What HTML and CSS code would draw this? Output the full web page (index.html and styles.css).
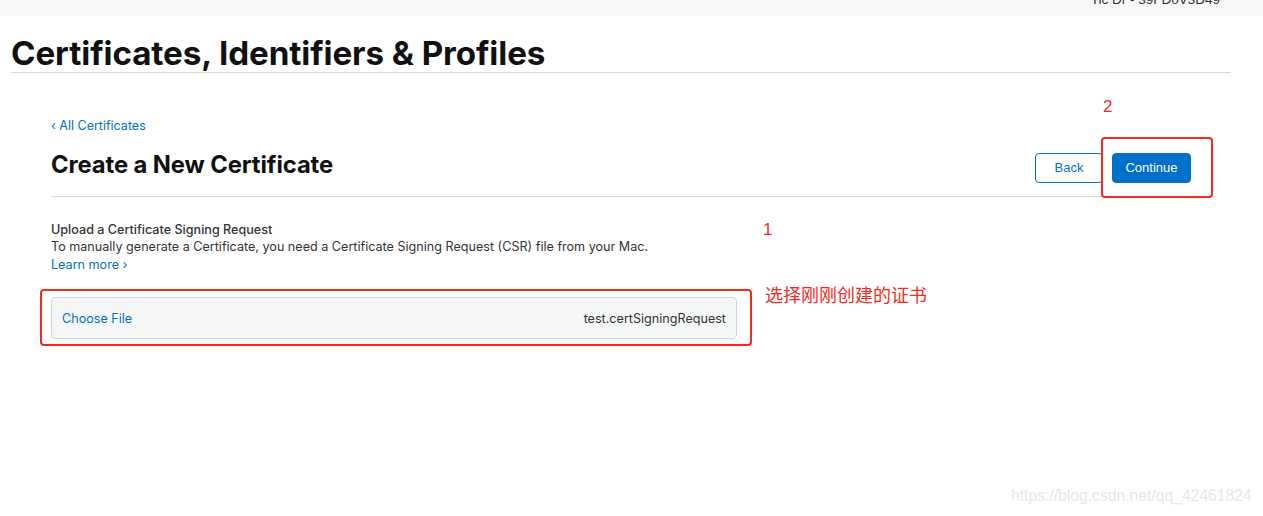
FILE: index.html
```html
<!DOCTYPE html>
<html>
<head>
<meta charset="utf-8">
<link rel="stylesheet" href="styles.css">
</head>
<body>
<div class="topbar"><span class="team">Tic Dr - 39FD0V3D49</span></div>
<header class="header">
  <h1 class="title">Certificates, Identifiers &amp; Profiles</h1>
</header>
<main class="content">
  <a class="back-link" href="#">‹ All Certificates</a>
  <div class="page-head">
    <h2 class="page-title">Create a New Certificate</h2>
    <div class="actions">
      <button class="btn btn-outline">Back</button>
      <button class="btn btn-primary">Continue</button>
    </div>
  </div>
  <section class="upload">
    <div class="upload-title">Upload a Certificate Signing Request</div>
    <div class="upload-desc">To manually generate a Certificate, you need a Certificate Signing Request (CSR) file from your Mac.</div>
    <a class="learn" href="#">Learn more ›</a>
    <div class="file-box">
      <span class="choose">Choose File</span>
      <span class="filename">test.certSigningRequest</span>
    </div>
  </section>
</main>
<div class="anno anno-num2">2</div>
<div class="anno anno-box2"></div>
<div class="anno anno-num1">1</div>
<div class="anno anno-box1"></div>
<div class="anno anno-text">选择刚刚创建的证书</div>
<div class="watermark">https://blog.csdn.net/qq_42461824</div>
</body>
</html>
```

FILE: styles.css
```css
html, body {
  margin: 0;
  padding: 0;
  background: #fff;
  font-family: Inter, "Liberation Sans", Arial, sans-serif;
  color: #1d1d1f;
}
.topbar {
  height: 16px;
  background: #f7f7f7;
  overflow: hidden;
  position: relative;
}
.team {
  position: absolute;
  right: 43px;
  top: -8px;
  font-size: 13.5px;
  line-height: 16px;
  color: #333;
  font-family: "Liberation Sans", Arial, sans-serif;
}
.header {
  margin: 0 32px 0 11px;
  border-bottom: 1px solid #d6d6d6;
  padding-top: 18px;
  height: 38px;
}
.title {
  margin: 0;
  font-size: 33.2px;
  line-height: 38px;
  font-weight: 700;
  color: #111;
  letter-spacing: -0.1px;
}
.content {
  margin: 0 72px 0 51px;
  padding-top: 45px;
}
.back-link {
  display: block;
  font-size: 12.5px;
  line-height: 16px;
  color: #0070c9;
  text-decoration: none;
}
.page-head {
  display: flex;
  align-items: center;
  justify-content: space-between;
  border-bottom: 1px solid #d6d6d6;
  height: 62px;
}
.page-title {
  margin: 0;
  font-size: 23.8px;
  line-height: 30px;
  font-weight: 700;
  color: #111;
  letter-spacing: -0.1px;
}
.actions {
  display: flex;
  gap: 9px;
  padding-top: 5px;
}
.btn {
  height: 30px;
  border-radius: 4px;
  font-family: "Liberation Sans", Arial, sans-serif;
  font-size: 13px;
  padding: 0;
  box-sizing: border-box;
}
.btn-outline {
  width: 68px;
  border: 1px solid #0070c9;
  background: #fff;
  color: #0070c9;
}
.btn-primary {
  width: 79px;
  border: 1px solid #0070c9;
  background: #0070c9;
  color: #fff;
}
.upload {
  padding-top: 24px;
}
.upload-title {
  font-size: 12.6px;
  line-height: 17px;
  color: #333;
  font-weight: 500;
}
.upload-desc {
  font-size: 12.6px;
  line-height: 17px;
  color: #333;
}
.learn {
  display: block;
  font-size: 12.6px;
  line-height: 20px;
  color: #0070c9;
  text-decoration: none;
}
.file-box {
  margin-top: 22px;
  width: 686px;
  height: 42px;
  box-sizing: border-box;
  border: 1px solid #d2d2d2;
  border-radius: 4px;
  background: #f5f7f7;
  display: flex;
  align-items: center;
  justify-content: space-between;
  padding: 0 10px;
  font-size: 12.6px;
}
.choose { color: #0070c9; }
.filename { color: #333; }
.anno {
  position: absolute;
  color: #f52a1f;
  font-family: "Noto Sans CJK SC", "Liberation Sans", sans-serif;
}
.anno-num2 {
  left: 1103px;
  top: 97px;
  font-size: 17px;
  font-family: "Liberation Sans", sans-serif;
}
.anno-num1 {
  left: 763px;
  top: 220px;
  font-size: 17px;
  font-family: "Liberation Sans", sans-serif;
}
.anno-box2 {
  left: 1101px;
  top: 137px;
  width: 108px;
  height: 57px;
  border: 2px solid #f52a1f;
  border-radius: 4px;
}
.anno-box1 {
  left: 40px;
  top: 289px;
  width: 708px;
  height: 53px;
  border: 2px solid #f52a1f;
  border-radius: 4px;
}
.anno-text {
  left: 765px;
  top: 281px;
  font-size: 18px;
  line-height: 26px;
}
.watermark {
  position: absolute;
  left: 1011px;
  top: 487px;
  font-family: "Liberation Sans", Arial, sans-serif;
  font-size: 15.7px;
  color: #e8e8e8;
}
```
